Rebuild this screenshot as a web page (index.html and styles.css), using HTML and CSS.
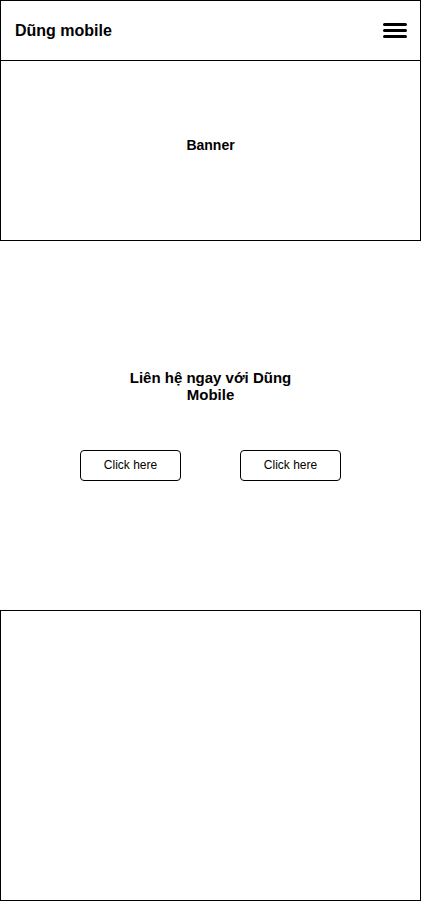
FILE: index.html
```html
<!DOCTYPE html>
<html lang="vi">
<head>
<meta charset="utf-8">
<title>Dũng mobile</title>
<link rel="stylesheet" href="styles.css">
</head>
<body>
<header class="topbar">
  <div class="brand">Dũng mobile</div>
  <svg class="menu-icon" width="24" height="16" viewBox="0 0 24 16" aria-hidden="true">
    <path d="M1.5 1.5H22.5M1.5 7.5H22.5M1.5 13.5H22.5" stroke="#000" stroke-width="3" stroke-linecap="round" fill="none"/>
  </svg>
</header>
<section class="banner">Banner</section>
<section class="contact">
  <h2 class="contact-title">Liên hệ ngay với Dũng Mobile</h2>
  <div class="actions">
    <button class="btn">Click here</button>
    <button class="btn">Click here</button>
  </div>
</section>
<footer class="footer"></footer>
</body>
</html>
```

FILE: styles.css
```css
* { box-sizing: border-box; }
html, body { margin: 0; padding: 0; background: #fff; }
body {
  width: 421px;
  font-family: "Liberation Sans", Arial, Helvetica, sans-serif;
  color: #000;
}
.topbar {
  height: 61px;
  border: 1px solid #000;
  display: flex;
  align-items: center;
  justify-content: space-between;
  padding: 0 13px 0 14px;
}
.brand {
  font-size: 16px;
  font-weight: bold;
  line-height: 19px;
}
.menu-icon { display: block; }
.banner {
  height: 181px;
  margin-top: -1px;
  border: 1px solid #000;
  display: flex;
  align-items: center;
  justify-content: center;
  padding-bottom: 12px;
  font-size: 14px;
  font-weight: bold;
}
.contact {
  height: 369px;
  padding-top: 128px;
  display: flex;
  flex-direction: column;
  align-items: center;
}
.contact-title {
  margin: 0;
  width: 180px;
  font-size: 15px;
  line-height: 17px;
  font-weight: bold;
  text-align: center;
}
.actions {
  margin-top: 47px;
  display: flex;
  gap: 59px;
}
.btn {
  width: 101px;
  height: 31px;
  border: 1px solid #000;
  border-radius: 4px;
  background: #fff;
  font-family: "Liberation Sans", Arial, sans-serif;
  font-size: 12px;
  color: #000;
  padding: 0 0 2px;
}
.footer {
  height: 291px;
  border: 1px solid #000;
}
```
